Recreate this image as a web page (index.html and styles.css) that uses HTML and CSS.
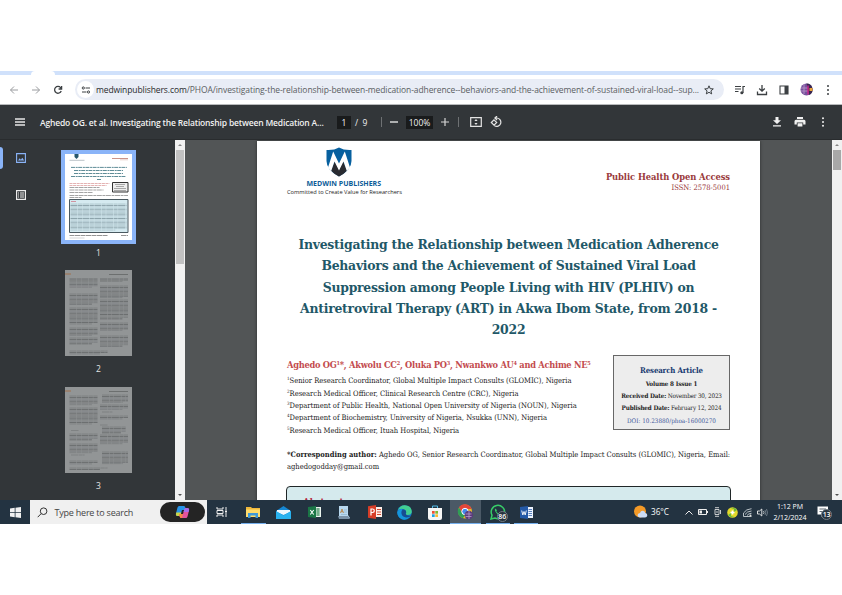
FILE: index.html
```html
<!DOCTYPE html>
<html lang="en">
<head>
    <meta charset="UTF-8">
    <meta name="viewport" content="width=device-width, initial-scale=1.0">
    <title>Aghedo OG. et al. Investigating the Relationship between Medication Adherence</title>
    <link rel="stylesheet" href="styles.css">
</head>
<body>
    <div class="screen">
        <div class="tabstrip"><div class="tab"></div></div>
        <div class="browser">
            <svg class="nav" width="10" height="10" viewBox="0 0 10 10"><path d="M9 5H1.5M5 1.5L1.5 5L5 8.5" stroke="#9a9c9f"/></svg>
            <svg class="nav" width="10" height="10" viewBox="0 0 10 10"><path d="M1 5h7.500M5 1.500L8.500 5L5 8.500" stroke="#9a9c9f"/></svg>
            <svg class="nav" width="10" height="10" viewBox="0 0 10 10"><path d="M8.200 6A3.400 3.400 0 1 1 7.600 2.600L8.500 3.600M8.600 1v3H5.600" stroke="#3c4043" stroke-width="1.300"/></svg>
            <div class="address">
                <span class="site">
                    <svg width="10" height="8" viewBox="0 0 10 8"><path d="M4.500 2h4.500M1 6h4.500" stroke="#3c4043"/><circle cx="2.300" cy="2" r="1.100" stroke="#3c4043"/><circle cx="7.500" cy="6" r="1.100" stroke="#3c4043"/></svg>
                </span>
                <span class="url"><b>medwinpublishers.com</b>/PHOA/investigating-the-relationship-between-medication-adherence--behaviors-and-the-achievement-of-sustained-viral-load--sup...</span>
                <svg class="star" width="10" height="10" viewBox="0 0 10 10"><path d="M5 .8l1.200 2.900 3.100.2-2.400 2 .8 3L5 7.300 2.300 8.900l.8-3-2.400-2 3.100-.2z" stroke="#3c4043"/></svg>
            </div>
            <div class="tools">
                <svg width="12" height="12" viewBox="0 0 12 12"><path d="M1 2.500h6M1 5h6M1 7.500h3.500M9 9V2.500h2" stroke="#3c4043" stroke-width="1.200"/><circle cx="7.800" cy="8.800" r="1.500" fill="#3c4043"/></svg>
                <svg width="12" height="12" viewBox="0 0 12 12"><path d="M6 1v6M3.200 4.500L6 7.200l2.800-2.700M1.500 7.500v3h9v-3" stroke="#3c4043" stroke-width="1.300"/></svg>
                <svg width="12" height="12" viewBox="0 0 12 12"><path d="M2 2h8v8H2z" stroke="#3c4043" stroke-width="1.100"/><path d="M6.500 2H10v8H6.500z" fill="#3c4043"/></svg>
                <svg width="13" height="13" viewBox="0 0 13 13"><circle cx="6.500" cy="6.500" r="6" fill="#76529c"/><path d="M6.500.5a6 6 0 0 1 2.500 11.500z" fill="#372750"/><path d="M1 5h7M1 8h7M4 1v10" stroke="#b18ac4"/><path d="M8 2.500v9" stroke="#ca268e" stroke-width="1.500"/><path d="M9.500 5h3v3h-3z" fill="#eda53a"/></svg>
                <svg class="dark" width="10" height="12" viewBox="0 0 10 12"><circle cx="5" cy="2" r="1"/><circle cx="5" cy="6" r="1"/><circle cx="5" cy="10" r="1"/></svg>
            </div>
        </div>

        <div class="pdfbar">
            <svg class="menu" width="10" height="8" viewBox="0 0 10 8"><path d="M0 1h10M0 4h10M0 7h10" stroke="#e6e6e6" stroke-width="1.400"/></svg>
            <span class="doc-name">Aghedo OG. et al. Investigating the Relationship between Medication A...</span>
            <span class="box page-no">1</span>
            <span class="total">/&nbsp; 9</span>
            <i class="sep"></i>
            <svg class="minus" width="8" height="8" viewBox="0 0 8 8"><path d="M0 4h8" stroke="#f1f1f1" stroke-width="1.300"/></svg>
            <span class="box zoom">100%</span>
            <svg class="plus" width="8" height="8" viewBox="0 0 8 8"><path d="M0 4h8M4 0v8" stroke="#d5d5d5" stroke-width="1.200"/></svg>
            <i class="sep second"></i>
            <svg class="fit" width="12" height="10" viewBox="0 0 12 10"><path d="M.7.7h10.600v8.600H.7z" stroke="#e4e4e4" stroke-width="1.200"/><path d="M6 2l1.600 2H4.400zM6 8l1.600-2H4.400z" fill="#e4e4e4"/></svg>
            <svg class="rotate" width="12" height="12" viewBox="0 0 12 12"><path d="M5.500 2H7a4.200 4.200 0 1 1-2.500 7.800M7 0L4.900 2 7 4M4 3.800L6.700 6.500 4 9.200 1.300 6.500z" stroke="#e4e4e4" stroke-width="1.200"/></svg>
            <div class="actions">
                <svg class="light" width="10" height="10" viewBox="0 0 10 10"><path d="M3.500 0h3v3.200H9L5 7 1 3.200h2.500zM1 8.200h8v1.300H1z"/></svg>
                <svg class="light" width="12" height="10" viewBox="0 0 12 10"><path d="M3 0h6v2H3zM2 2.700h8q1.500 0 1.500 1.500V7.500H9.200V5.500H2.800v2H.5V4.200Q.5 2.700 2 2.700zM3.600 6.300h4.800V9.500H3.600z"/></svg>
                <svg class="light" width="10" height="10" viewBox="0 0 10 10"><circle cx="5" cy="1.300" r="1"/><circle cx="5" cy="5" r="1"/><circle cx="5" cy="8.700" r="1"/></svg>
            </div>
        </div>

        <div class="viewer">
            <div class="side">
                <div class="modes">
                    <svg class="current" width="10" height="10" viewBox="0 0 10 10"><path d="M.6.6h8.800v8.800H.6z" stroke="#8ab4f8" stroke-width="1.100"/><path d="M2 7.500l1.700-2.200 1.200 1.400 1.400-2 1.900 2.800z" fill="#8ab4f8"/></svg>
                    <svg width="10" height="10" viewBox="0 0 10 10"><path d="M.6.6h8.800v8.800H.6z" stroke="#ececec" stroke-width="1.200"/><path d="M2 3h1M4 3h4M2 5h1M4 5h4M2 7h1M4 7h4" stroke="#ececec"/></svg>
                </div>
                <div class="thumbs">
                    <div class="thumb selected">
                        <svg id="thumb1" width="67" height="86" viewBox="0 0 67 86">
                            <path d="M9.500 0h4v3l-2 2-2-2z" fill="#27566c"/>
                            <path d="M4.500 6.300h15" stroke="#8d9aa3" stroke-width=".6"/>
                            <path d="M47 4.500h16" stroke="#c5877a" stroke-width=".9"/><path d="M55 5.800h8" stroke="#d1a095" stroke-width=".5"/>
                            <path d="M6 13.400h56M9 16.500h49M9 19.500h49M6 22.500h55M32 25.500h4" stroke="#5e8c97" stroke-width="1" stroke-dasharray="4 .7 2 .5"/>
                            <path d="M4.500 29.500h40M4.500 31.500h37" stroke="#d99090" stroke-width=".7" stroke-dasharray="3 .6"/>
                            <path d="M4.500 33.500h30M4.500 36h34M4.500 38.500h23M4.500 41.500h58.500M4.500 43.500h12" stroke="#666" stroke-width=".6" stroke-dasharray="5 .6 3 .5"/>
                            <path d="M47.500 28.500h15.500v9.500H47.500z" fill="#eee" stroke="#333"/>
                            <path d="M50 30.500h10M51 32.500h8M49 34.500h12M49 36.500h12" stroke="#777" stroke-width=".6"/>
                            <path d="M4.500 45.500h58.500v33H4.500z" fill="#d5eaf0" stroke="#4a5960"/>
                            <path d="M6 47.500h5" stroke="#cf6d7d" stroke-width=".7"/>
                            <path d="M4.500 81.500h38M56 81.500h7" stroke="#666" stroke-width=".7" stroke-dasharray="5 .5"/><path d="M4.500 84h15" stroke="#aaa" stroke-width=".5"/>
                        </svg>
                    </div>
                    <span class="num one">1</span>
                    <div class="thumb"><svg id="thumb2" width="67" height="86" viewBox="0 0 67 86"></svg></div>
                    <span class="num two">2</span>
                    <div class="thumb"><svg id="thumb3" width="67" height="86" viewBox="0 0 67 86"></svg></div>
                    <span class="num three">3</span>
                </div>
                <div class="scroll side-scroll"><i class="up"></i><div class="handle"></div><i class="down"></i></div>
            </div>

            <div class="canvas">
                <div class="page">
                    <div class="masthead">
                        <div class="publisher">
                            <svg width="26" height="30" viewBox="0 0 26 30">
                                <path d="M.5 3Q8 3.500 13 .5q5 3 12.500 2.500v11q0 9-12.500 15.500Q.5 23 .5 14z" fill="#07609f"/>
                                <path d="M5 23.500L9 14l4 8.500 4-8.500 4 9.500q-3 3.500-8 6-5-2.500-8-6z" fill="#292b31"/>
                                <path d="M2 20.500L7.200 4.500 13 16.500l5.800-12L24 20.500l-3.200 3.500L17.500 14.500 13 23.500 8.500 14.500 5.200 24z" fill="#fff"/>
                            </svg>
                            <div class="brand">MEDWIN PUBLISHERS</div>
                            <div class="motto">Committed to Create Value for Researchers</div>
                        </div>
                        <div class="journal">
                            <div class="journal-name">Public Health Open Access</div>
                            <div class="issn">ISSN: 2578-5001</div>
                        </div>
                    </div>
                    <h1>
                        <span>Investigating the Relationship between Medication Adherence</span>
                        <span>Behaviors and the Achievement of Sustained Viral Load</span>
                        <span>Suppression among People Living with HIV (PLHIV) on</span>
                        <span>Antiretroviral Therapy (ART) in Akwa Ibom State, from 2018 -</span>
                        <span>2022</span>
                    </h1>
                    <div class="info">
                        <div class="people">
                            <div class="authors">Aghedo OG<sup>1</sup>*, Akwolu CC<sup>2</sup>, Oluka PO<sup>3</sup>, Nwankwo AU<sup>4</sup> and Achime NE<sup>5</sup></div>
                            <div class="affil"><sup>1</sup>Senior Research Coordinator, Global Multiple Impact Consults (GLOMIC), Nigeria</div>
                            <div class="affil"><sup>2</sup>Research Medical Officer, Clinical Research Centre (CRC), Nigeria</div>
                            <div class="affil"><sup>3</sup>Department of Public Health, National Open University of Nigeria (NOUN), Nigeria</div>
                            <div class="affil"><sup>4</sup>Department of Biochemistry, University of Nigeria, Nsukka (UNN), Nigeria</div>
                            <div class="affil"><sup>5</sup>Research Medical Officer, Ituah Hospital, Nigeria</div>
                        </div>
                        <div class="article">
                            <div class="kind">Research Article</div>
                            <div class="volume">Volume 8 Issue 1</div>
                            <div class="date"><b>Received Date:</b> November 30, 2023</div>
                            <div class="date"><b>Published Date:</b> February 12, 2024</div>
                            <div class="doi">DOI: 10.23880/phoa-16000270</div>
                        </div>
                    </div>
                    <div class="contact"><b>*Corresponding author:</b> Aghedo OG, Senior Research Coordinator, Global Multiple Impact Consults (GLOMIC), Nigeria, Email:</div>
                    <div class="contact mail">aghedogodday@gmail.com</div>
                    <div class="abstract">Abstract</div>
                </div>
            </div>
            <div class="scroll main-scroll"><i class="up"></i><div class="handle"></div><i class="down"></i></div>
        </div>

        <div class="taskbar">
            <div class="start"><svg class="light" width="11" height="11" viewBox="0 0 11 11"><path d="M0 1.500L4.700.8v4.400H0zM5.500.7L11 0v5.200H5.500zM0 5.900h4.700v4.400L0 9.600zM5.500 5.900H11V11l-5.500-.7z"/></svg></div>
            <div class="search">
                <svg width="11" height="11" viewBox="0 0 11 11"><circle cx="6.600" cy="4.200" r="3.300" stroke="#333"/><path d="M4.200 6.600L.7 10.200" stroke="#333"/></svg>
                <span>Type here to search</span>
                <div class="copilot">
                    <svg width="15" height="14" viewBox="0 0 15 14">
                        <path d="M4 1h5q1 0 1.500 2L11 5H7L5.500 10q-.5 1-1.500 1H2.500Q.5 11 1 8.500l1.500-6Q3 1 4 1z" fill="#2794e8"/>
                        <path d="M1.300 7.500h5L5.500 10q-.5 1-1.500 1H2.500Q.5 11 1 8.500z" fill="#c9d548"/>
                        <path d="M11 13H6q-1 0-1.500-2L4 9h4l1.500-5q.5-1 1.500-1h1.500Q14.500 3 14 5.500l-1.500 6Q12 13 11 13z" fill="#e3539d"/>
                        <path d="M9.500 4q.5-1 1.500-1h1.500Q14.500 3 14 5.500L13.500 7h-5z" fill="#a66cec"/>
                        <path d="M4 9h4l-1 4H6q-1 0-1.500-2z" fill="#f18845"/>
                    </svg>
                </div>
            </div>
            <div class="app"><svg width="12" height="10" viewBox="0 0 12 10"><path d="M1 0v2h6V0M1 10V8h6v2M1 3.500h6v3H1zM10 0v3M10 6v4" stroke="#eee"/><path d="M9 3.500h2v2H9z" fill="#eee"/></svg></div>
            <div class="app open folder"><svg width="14" height="12" viewBox="0 0 14 12"><path d="M0 1h5l1 1h8v9H0z" fill="#eeb83c"/><path d="M0 3.500h14V11H0z" fill="#ffdc6b"/><path d="M2 7h10v5H9.500V9.500h-5V12H2z" fill="#3f99d8"/></svg></div>
            <div class="app"><svg width="15" height="13" viewBox="0 0 15 13"><path d="M0 5l7.500-5L15 5v8H0z" fill="#1687d2"/><path d="M1 4h13v2L7.500 9 1 6z" fill="#eef7fd"/><path d="M0 5l7.500 4.500L15 5v8H0z" fill="#29b2ef"/></svg></div>
            <div class="app"><svg width="13" height="12" viewBox="0 0 13 12"><path d="M7 1h6v10H7z" fill="#ebf4ee"/><path d="M8 3h4M8 5h4M8 7h4M8 9h4M10 2v8" stroke="#2d8652" stroke-width=".8"/><path d="M0 1l8-1v12l-8-1z" fill="#1b7646"/><path d="M2.300 4l3.400 4.500M5.700 4L2.300 8.500" stroke="#fff" stroke-width="1.100"/></svg></div>
            <div class="app"><svg width="12" height="13" viewBox="0 0 12 13"><path d="M1 0h9v9l2 3H1z" fill="#b9d9ef"/><path d="M0 10h10l2 3H1z" fill="#7b93a8"/><path d="M2.500 7L4 3l1.500 4M3 5.700h2" stroke="#b67c38" stroke-width=".8"/><path d="M6 4h3M6 6h3M3 8.500h6" stroke="#8fb3cc" stroke-width=".7"/></svg></div>
            <div class="app"><svg width="14" height="14" viewBox="0 0 14 14"><path d="M7 2h7v10H7z" fill="#fff0ea"/><path d="M9 4.500h4M9 7h4M9 9.500h4" stroke="#d24a31"/><path d="M0 1.200L8 0v14l-8-1.200z" fill="#d63d27"/><path d="M3 10.500V4h1.500q1.800 0 1.800 1.700T4.500 7.500H3" stroke="#fff" stroke-width="1.200"/></svg></div>
            <div class="app"><svg width="15" height="15" viewBox="0 0 15 15"><circle cx="7.500" cy="7.500" r="7.300" fill="#1478c8"/><path d="M1 5Q3 0 8 .2q6 .3 6.800 6Q14.800 10 10.500 10 8 9.800 9 8.300 9.800 5.500 7 4.200 4 3.200 1 5z" fill="#42ce91"/><path d="M.3 7Q2 3.200 5.500 4.200 3.500 6 5 9.500q2 3.500 8 2.200Q9 16 4.500 14 .2 12 .3 7z" fill="#1595dc"/><path d="M5.500 4.500Q9 4 9.200 7.200 8 9 9.500 10q2.500 1.500 4.500.3-1.500 2.500-5 2.200Q4 11.500 4.500 7z" fill="#174c91"/></svg></div>
            <div class="app"><svg width="14" height="15" viewBox="0 0 14 15"><path d="M4.500 4V1h5v3" stroke="#55bde9"/><path d="M0 3h14v10q0 2-2 2H2q-2 0-2-2z" fill="#f6f6f6"/><path d="M4 6h2.700v2.700H4z" fill="#ef5033"/><path d="M7.300 6H10v2.700H7.300z" fill="#7eba31"/><path d="M4 9.300h2.700V12H4z" fill="#20a2e5"/><path d="M7.300 9.300H10V12H7.300z" fill="#fcba30"/></svg></div>
            <div class="app open active"><svg width="17" height="16" viewBox="0 0 17 16"><circle cx="8" cy="7.500" r="7" fill="#e7b82d"/><path d="M2 3.500a7 7 0 0 1 12.500 1.500H8L5 9z" fill="#e3453a"/><path d="M2 3.500L5.500 9.500 8 11l-2 3.200A7 7 0 0 1 2 3.500z" fill="#2f9e56"/><circle cx="8" cy="7.500" r="3.200" fill="#4589ec" stroke="#fff"/><circle cx="11.800" cy="11" r="4.300" fill="#5b3b7b"/><path d="M8.500 10h6M8.500 12.500h6M12 7v8" stroke="#b79cca" stroke-width=".8"/></svg></div>
            <div class="app open chat"><svg width="16" height="16" viewBox="0 0 16 16"><path d="M1 15l1-3.800A6.700 6.700 0 1 1 4.900 14z" stroke="#38cc68" stroke-width="1.500"/><path d="M5.500 4.500q-1.200 1-.3 2.800 1.400 3 4.500 3.900 1.700 0 1.800-1.500L9.500 8.500 8.500 9.500Q7 8.700 6.300 7.200L7 6.200z" fill="#38cc68"/></svg><span class="badge">86</span></div>
            <div class="app open word"><svg width="13" height="13" viewBox="0 0 13 13"><path d="M7 1h6v11H7z" fill="#edf4ff"/><path d="M8.500 3.500H12M8.500 5.500H12M8.500 7.500H12M8.500 9.500H12" stroke="#3263ad" stroke-width=".8"/><path d="M0 1l8-1v13l-8-1z" fill="#2459a6"/><path d="M1.700 4.500L2.800 9 4 5.500 5.200 9l1.100-4.500" stroke="#fff" stroke-width=".9"/></svg></div>
            <div class="tray">
                <svg class="weather" width="14" height="14" viewBox="0 0 14 14"><circle cx="6" cy="6.500" r="6" fill="#f49a27"/><path d="M6 12.500q-2.500-.2-2.500-2.200T6 8q.7-2.500 3-2.300Q11 6 11.300 8 13.500 8.300 13.300 10.500 13 12.500 11 12.500z" fill="#cddcf5"/></svg>
                <span class="temp">36°C</span>
                <svg class="chev" width="8" height="5" viewBox="0 0 8 5"><path d="M.5 4.500L4 1l3.500 3.500" stroke="#eee"/></svg>
                <svg width="10" height="6" viewBox="0 0 10 6"><path d="M.5.5h8v5h-8zM9.500 2v2" stroke="#eee"/><path d="M1.500 1.500H4v3H1.500z" fill="#eee"/></svg>
                <svg width="9" height="10" viewBox="0 0 9 10"><path d="M2 .7h4M2 9.300h4M2 2.500h4v5H2zM7.500 3v4" stroke="#ddd" stroke-width=".9"/><circle cx="4" cy="5" r=".8" fill="#ddd"/></svg>
                <svg width="11" height="11" viewBox="0 0 11 11"><circle cx="5.500" cy="5.500" r="5.300" fill="#e4d829"/><path d="M3 .8Q8 0 10 3L7 5V2z" fill="#66b940"/><path d="M1 8Q3 11 8 10.200L4 9V6z" fill="#66b940"/><path d="M5.500 3.500v4M3.500 5.500h4" stroke="#fff" stroke-width="1.600"/></svg>
                <svg width="9" height="9" viewBox="0 0 9 9"><path d="M.5 5Q3 1 8.500.7M2 6.500Q4 3.300 8.500 3M4 7.500Q5.500 5.500 8.500 5.300M.5 5v3.500h8" stroke="#c9d0d5" stroke-width=".9"/><circle cx="7.500" cy="7.500" r="1" fill="#ddd"/></svg>
                <svg width="11" height="9" viewBox="0 0 11 9"><path d="M.5 3h2l2.300-2v7L2.500 6h-2z" stroke="#eee" stroke-width=".9"/><path d="M6.500 3q1 1.500 0 3" stroke="#ddd" stroke-width=".8"/><path d="M8 2q1.500 2.500 0 5M9.500 1q2 3.500 0 7" stroke="#8d9aa3" stroke-width=".7"/></svg>
                <div class="clock"><span>1:12 PM</span><span>2/12/2024</span></div>
                <div class="notes"><svg width="12" height="12" viewBox="0 0 12 12"><path d="M.5.500h10.500v8H7L4.500 11V8.500h-4z" fill="#fff"/><path d="M2.500 3h6.500M2.500 5.500h6.500" stroke="#33434f" stroke-width=".8"/></svg><span class="badge">13</span></div>
            </div>
        </div>
    </div>

    <script>
        // text rows of the small pages: [x, first y, last y, width]
        const thumbs = {
            thumb1: [[5.5, 50, 77, 56]],
            thumb2: [[4.5, 8.5, 18.5, 28], [4.500, 24, 35, 28], [4.5, 38, 54, 28], [4.5, 58, 66, 28], [4.5, 68, 75, 28], [35, 8.5, 12, 28], [35, 16, 28, 28], [35, 30, 50, 28], [35, 53, 61, 28], [35, 66, 77, 28], [4.5, 81, 84, 38]],
            thumb3: [[4.5, 9, 18, 28], [4.5, 21, 38, 28], [6, 43.500, 44, 10], [4.5, 47, 53, 28], [4.5, 57, 66, 28], [6, 68, 69, 17], [4.5, 74, 77, 28], [37, 8, 16, 26], [35, 18, 23, 28], [37, 25, 26, 13], [35, 29, 33, 28], [35, 38, 39, 10], [37, 40, 46, 24], [35, 48, 57, 28], [37, 65, 77, 26], [4.5, 81, 83, 38]]
        };
        for (const id in thumbs) {
            const svg = document.getElementById(id);
            let rows = id == "thumb1" ? "" : '<path d="M0 4h6" stroke="#a1704d"/><path d="M44 4.500h19" stroke="#5c5e5e" stroke-width=".7"/>';
            thumbs[id].forEach(([x, from, to, w]) => {
                for (let y = from, i = 0; y <= to; y += 1.45, i++) {
                    const color = id == "thumb1" ? (i % 3 == 1 ? "#5c747e" : "#9cb5bd") : (i % 3 == 1 ? "#535557" : "#727577");
                    rows += `<path d="M${x} ${y}h${y + 1.45 > to ? w * 0.8 : w}" stroke="${color}" stroke-width=".6" stroke-dasharray="7 .5 4 .4"/>`;
                }
            });
            svg.innerHTML += rows;
        }
    </script>
</body>
</html>
```
FILE: styles.css
```css
*{
    margin: 0px;
    padding: 0px;
    box-sizing: border-box;
}
body{
    width: 842px;
    height: 595px;
    background: #fff;
    overflow: hidden;
    font-family: "Open Sans", "Noto Sans", sans-serif;
}
svg{
    display: block;
    fill: none;
    flex-shrink: 0;
}
.light{
    fill: #f1f1f1;
}
.dark{
    fill: #3c4043;
}
.screen{
    display: flex;
    flex-direction: column;
    height: 524px;
    padding-top: 71px;
}
.tabstrip{
    height: 4px;
    flex-shrink: 0;
    background: #d0e1fb;
}
.tab{
    width: 24px;
    height: 4px;
    margin-left: 31px;
    border-radius: 4px 4px 0 0;
    background: #fff;
}
.browser{
    display: flex;
    align-items: center;
    height: 30px;
    flex-shrink: 0;
    padding-left: 9px;
    border-bottom: 1px solid #b8babc;
}
.nav{
    margin-right: 12px;
}
.nav + .nav + .nav{
    margin-right: 13px;
}
.address{
    display: flex;
    align-items: center;
    width: 649px;
    height: 21px;
    flex-shrink: 0;
    margin-left: -1px;
    padding-left: 2px;
    border-radius: 11px;
    background: #e9edf6;
}
.site{
    display: flex;
    align-items: center;
    justify-content: center;
    width: 17px;
    height: 17px;
    flex-shrink: 0;
    border-radius: 50%;
    background: #fff;
}
.url{
    width: 602px;
    flex-shrink: 0;
    margin-left: 2px;
    font-size: 8.5px;
    letter-spacing: -0.09px;
    color: #5b5e62;
    white-space: nowrap;
}
.url b{
    font-weight: 400;
    color: #27292b;
}
.star{
    margin-left: 6px;
}
.tools{
    display: flex;
    align-items: center;
    gap: 10px;
    margin-left: 10px;
}
.pdfbar{
    display: flex;
    align-items: center;
    height: 35px;
    flex-shrink: 0;
    padding-left: 15px;
    background: #323639;
    color: #f1f1f1;
    font-size: 8.5px;
    white-space: nowrap;
    border-bottom: 1px solid #292c2e;
}
.doc-name{
    width: 286px;
    margin-left: 15px;
    font-weight: 600;
    letter-spacing: -0.17px;
}
.box{
    height: 13px;
    margin-left: 11px;
    line-height: 13px;
    text-align: center;
    background: #191b1c;
}
.page-no{
    width: 14px;
}
.total{
    width: 14px;
    margin-left: 4px;
}
.sep{
    width: 1px;
    height: 10px;
    margin-left: 12px;
    background: #6e7173;
}
.sep.second{
    margin-left: 9px;
}
.minus{
    margin-left: 8px;
}
.box.zoom{
    width: 27px;
    margin-left: 8px;
}
.plus{
    margin-left: 8px;
}
.fit{
    margin-left: 11px;
}
.rotate{
    margin-left: 8px;
}
.actions{
    display: flex;
    gap: 12px;
    margin-left: auto;
    padding-right: 14px;
}
.viewer{
    display: flex;
    height: 360px;
    flex-shrink: 0;
    background: #525556;
    overflow: hidden;
}
.side{
    display: flex;
    width: 185px;
    flex-shrink: 0;
    background: #323639;
}
.modes{
    width: 62px;
    padding: 13px 0 0 16px;
    position: relative;
}
.modes svg{
    margin-bottom: 27px;
}
.modes:before{
    content: "";
    position: absolute;
    left: 0;
    top: 7px;
    width: 3px;
    height: 22px;
    border-radius: 0 3px 3px 0;
    background: #8ab4f8;
}
.thumbs{
    display: flex;
    flex-direction: column;
    align-items: center;
    width: 73px;
    padding-top: 10px;
}
.thumb{
    flex-shrink: 0;
    height: 86px;
    background: #929596;
}
.selected{
    height: 94px;
    padding: 4px;
    background: #8ab4f8;
}
.selected svg{
    background: #fff;
}
.num{
    height: 26px;
    line-height: 17px;
    font-size: 8.5px;
    color: #e4e4e4;
}
.num.two{
    height: 31px;
    line-height: 25px;
}
.num.three{
    line-height: 25px;
}
.scroll{
    display: flex;
    flex-direction: column;
    align-items: center;
    width: 10px;
    height: 360px;
    flex-shrink: 0;
    background: #f1f1f1;
}
.side-scroll{
    margin-left: 40px;
}
.main-scroll{
    margin-left: 72px;
}
.up, .down{
    width: 4px;
    height: 2px;
    border: 2px solid transparent;
    border-top-width: 0;
    border-bottom-color: #858585;
}
.up{
    margin: 4px 0;
}
.down{
    margin: auto 0 4px;
    border-width: 2px 2px 0;
    border-color: #505050 transparent transparent;
}
.handle{
    width: 8px;
    height: 114px;
    background: #c1c1c1;
}
.main-scroll .handle{
    height: 20px;
    background: #a8a8a8;
}
.canvas{
    width: 575px;
    padding: 1px 0 0 72px;
}
.page{
    width: 503px;
    height: 380px;
    padding: 6px 30px 0 30px;
    background: #fff;
    box-shadow: 0 0 3px #2b2d2e;
    font-family: "DejaVu Serif Condensed", "DejaVu Serif", serif;
    font-stretch: condensed;
    color: #1c1c1c;
    white-space: nowrap;
}
.masthead{
    display: flex;
    justify-content: space-between;
    height: 87px;
}
.publisher{
    width: 116px;
    font-family: "Open Sans", sans-serif;
    font-stretch: normal;
}
.publisher svg{
    margin-left: 39px;
}
.brand{
    margin-left: 19.500px;
    line-height: 14px;
    font-size: 7px;
    font-weight: 700;
    color: #0c5c98;
}
.motto{
    line-height: 3px;
    font-size: 5.7px;
}
.journal{
    padding-top: 23px;
    text-align: right;
    color: #99393a;
}
.journal-name{
    line-height: 14px;
    font-size: 9.3px;
    font-weight: 700;
    letter-spacing: -0.08px;
}
.issn{
    line-height: 7px;
    font-size: 7.5px;
}
h1{
    display: flex;
    flex-direction: column;
    align-items: center;
    line-height: 21.3px;
    font-size: 13.8px;
    letter-spacing: -0.25px;
    color: #1f5868;
}
.info{
    display: flex;
    justify-content: space-between;
    margin-top: 15px;
}
sup{
    font-size: 60%;
    line-height: 0;
    vertical-align: 3px;
}
.authors{
    height: 18px;
    line-height: 19px;
    margin-bottom: 2px;
    font-size: 9.2px;
    letter-spacing: -0.26px;
    font-weight: 700;
    color: #c34b4e;
}
.affil{
    line-height: 12.3px;
    font-size: 7.5px;
}
.article{
    width: 117px;
    height: 75px;
    flex-shrink: 0;
    margin-left: -10px;
    padding-top: 9px;
    border: 1px solid #676767;
    background: #ededed;
    line-height: 12.3px;
    text-align: center;
    font-size: 6.3px;
}
.kind{
    font-size: 7.8px;
    font-weight: 700;
    letter-spacing: -0.15px;
    color: #183a70;
}
.volume{
    font-weight: 700;
    letter-spacing: -0.15px;
}
.date{
    letter-spacing: -0.17px;
}
.doi{
    color: #3e579b;
}
.contact{
    margin-top: 12px;
    line-height: 12.3px;
    font-size: 7.5px;
}
.mail{
    margin-top: 0;
}
.abstract{
    width: 445px;
    height: 60px;
    margin-left: -1px;
    margin-top: 12px;
    padding: 8px 16px;
    border: 1px solid #202728;
    border-radius: 4px;
    background: #d5eaed;
    font-size: 9.5px;
    line-height: 13px;
    font-weight: 700;
    color: #b52b44;
}
.taskbar{
    display: flex;
    height: 24px;
    flex-shrink: 0;
    background: #233341;
    color: #fff;
}
.start{
    display: flex;
    align-items: center;
    justify-content: center;
    width: 30px;
}
.search{
    display: flex;
    align-items: center;
    width: 177px;
    padding: 0 2px 0 7px;
    background: #f0f0f0;
}
.search span{
    margin-left: 6.500px;
    font-size: 9px;
    letter-spacing: -0.22px;
    color: #444;
}
.copilot{
    display: flex;
    align-items: center;
    justify-content: center;
    width: 45px;
    height: 20px;
    margin-left: auto;
    border-radius: 10px;
    background: #242424;
}
.app{
    display: flex;
    align-items: center;
    justify-content: center;
    position: relative;
    width: 30.300px;
    flex-shrink: 0;
}
.folder{
    margin-left: 1px;
}
.open:after{
    content: "";
    position: absolute;
    bottom: 0;
    left: 3px;
    right: 3px;
    height: 1px;
    background: #76b0ee;
}
.active{
    background: #4b5966;
}
.active:after{
    left: 0;
    right: 0;
}
.chat{
    margin-left: 2px;
}
.word{
    margin-left: -2px;
}
.badge{
    position: absolute;
    left: 14px;
    top: 11px;
    width: 11px;
    height: 11px;
    border: 1px solid #727b83;
    border-radius: 50%;
    background: #26333e;
    line-height: 9px;
    text-align: center;
    font-size: 7px;
    font-weight: 600;
    letter-spacing: -0.2px;
    color: #fff;
}
.tray{
    display: flex;
    align-items: center;
    gap: 5px;
    margin-left: auto;
}
.weather{
    margin-right: -2px;
}
.temp{
    margin: 0 11px 0 0;
    font-size: 8.2px;
    line-height: 10px;
}
.clock{
    display: flex;
    flex-direction: column;
    width: 38px;
    margin-left: -2px;
    line-height: 11px;
    text-align: center;
    font-size: 7px;
    white-space: nowrap;
}
.notes{
    position: relative;
    width: 28px;
    padding-left: 3px;
}
.notes .badge{
    left: 7px;
    top: 3px;
}
```
